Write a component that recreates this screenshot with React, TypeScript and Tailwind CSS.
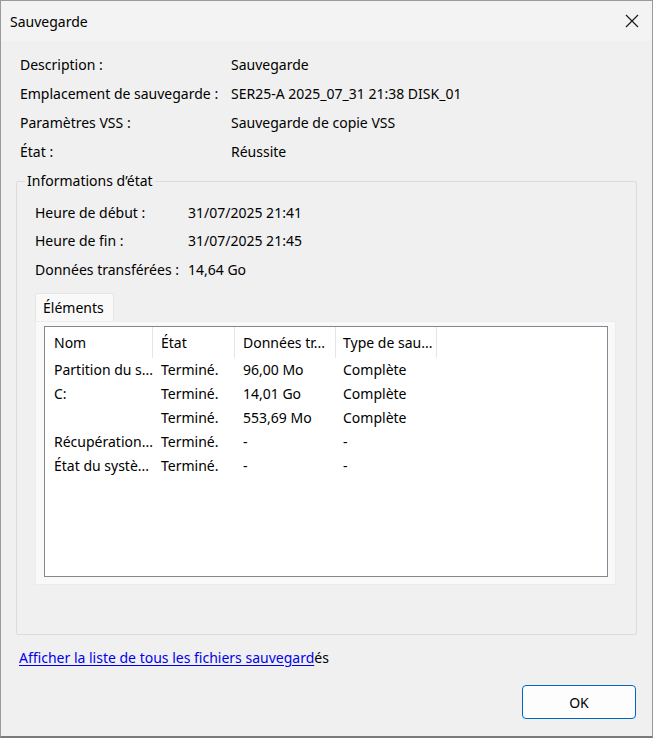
import React from "react";

const summary = [
  { label: "Description :", value: "Sauvegarde" },
  { label: "Emplacement de sauvegarde :", value: "SER25-A 2025_07_31 21:38 DISK_01" },
  { label: "Paramètres VSS :", value: "Sauvegarde de copie VSS" },
  { label: "État :", value: "Réussite" },
];

const status = [
  { label: "Heure de début :", value: "31/07/2025 21:41" },
  { label: "Heure de fin :", value: "31/07/2025 21:45" },
  { label: "Données transférées :", value: "14,64 Go" },
];

const columns = [
  { title: "Nom", width: "w-[108px]", pad: "pl-[9px]" },
  { title: "État", width: "w-[82px]", pad: "pl-[8px]" },
  { title: "Données tr...", width: "w-[101px]", pad: "pl-[8px]" },
  { title: "Type de sau...", width: "w-[101px]", pad: "pl-[7px]" },
];

const items = [
  ["Partition du s...", "Terminé.", "96,00 Mo", "Complète"],
  ["C:", "Terminé.", "14,01 Go", "Complète"],
  ["", "Terminé.", "553,69 Mo", "Complète"],
  ["Récupération...", "Terminé.", "-", "-"],
  ["État du systè...", "Terminé.", "-", "-"],
];

export default function App() {
  return (
    <div className="w-[653px] h-[738px] flex flex-col bg-[#f0f0f0] border border-[#9a9a9a] border-b-[2px] border-b-[#7a7a7a] text-[14px] text-black font-['Noto_Sans',sans-serif] overflow-hidden">
      {/* Title bar */}
      <div className="h-[40px] shrink-0 flex items-center justify-between bg-[#f3f3f3] pl-[9px] pr-[13px]">
        <span className="text-[14px]">Sauvegarde</span>
        <svg width="14" height="14" viewBox="0 0 14 14" fill="none" stroke="#1a1a1a" strokeWidth="1.2">
          <path d="M1 1l12 12M13 1L1 13" />
        </svg>
      </div>

      <div className="flex-1 flex flex-col pt-[9px]">
        {/* Summary */}
        <div className="flex flex-col pl-[19px]">
          {summary.map((r) => (
            <div key={r.label} className="h-[29px] flex items-center">
              <span className="w-[211px]">{r.label}</span>
              <span>{r.value}</span>
            </div>
          ))}
        </div>

        {/* Group box */}
        <fieldset className="ml-[15px] mr-[15px] mt-[6px] h-[463px] border border-[#dcdcdc] rounded-[2px]">
          <legend className="ml-[8px] px-[2px] leading-[18px]">Informations d’état</legend>
          <div className="pl-[18px] pr-[16px]">
            <div className="flex flex-col pt-[8px]">
              {status.map((r) => (
                <div key={r.label} className="h-[28.5px] flex items-center">
                  <span className="w-[153px]">{r.label}</span>
                  <span>{r.value}</span>
                </div>
              ))}
            </div>

            {/* Tabs */}
            <div className="mt-[9px] flex flex-col">
              <div className="flex">
                <div className="h-[28px] w-[79px] flex items-center pl-[7px] bg-[#f9f9f9] border border-b-0 border-[#e5e5e5] rounded-t-[2px]">
                  Éléments
                </div>
              </div>
              <div className="h-[264px] mr-[4px] bg-[#f9f9f9] border border-[#ececec] pl-[8px] pr-[7px] pt-[4px] pb-[7px]">
                <div className="h-full bg-white border border-[#828790]">
                  <div className="flex h-[31px] items-stretch">
                    {columns.map((c) => (
                      <div key={c.title} className={`${c.width} ${c.pad} flex items-center border-r border-[#e5e5e5]`}>
                        <span className="whitespace-nowrap">{c.title}</span>
                      </div>
                    ))}
                  </div>
                  {items.map((row, i) => (
                    <div key={i} className="flex h-[24px] items-center">
                      {row.map((cell, j) => (
                        <div key={j} className={`${columns[j].width} ${columns[j].pad} whitespace-nowrap`}>
                          {cell}
                        </div>
                      ))}
                    </div>
                  ))}
                </div>
              </div>
            </div>
          </div>
        </fieldset>

        {/* Link */}
        <div className="pl-[18px] mt-[12px] h-[20px] flex items-center">
          <a href="#" className="text-[#0000ee] underline underline-offset-2 decoration-[1px]">
            Afficher la liste de tous les fichiers sauvegard
          </a>
          <span>és</span>
        </div>

        {/* Buttons */}
        <div className="flex justify-end pr-[16px] mt-[18px]">
          <button className="w-[114px] h-[34px] bg-[#fdfdfd] border border-[#0067c0] rounded-[4px] flex items-center justify-center">
            OK
          </button>
        </div>
      </div>
    </div>
  );
}
